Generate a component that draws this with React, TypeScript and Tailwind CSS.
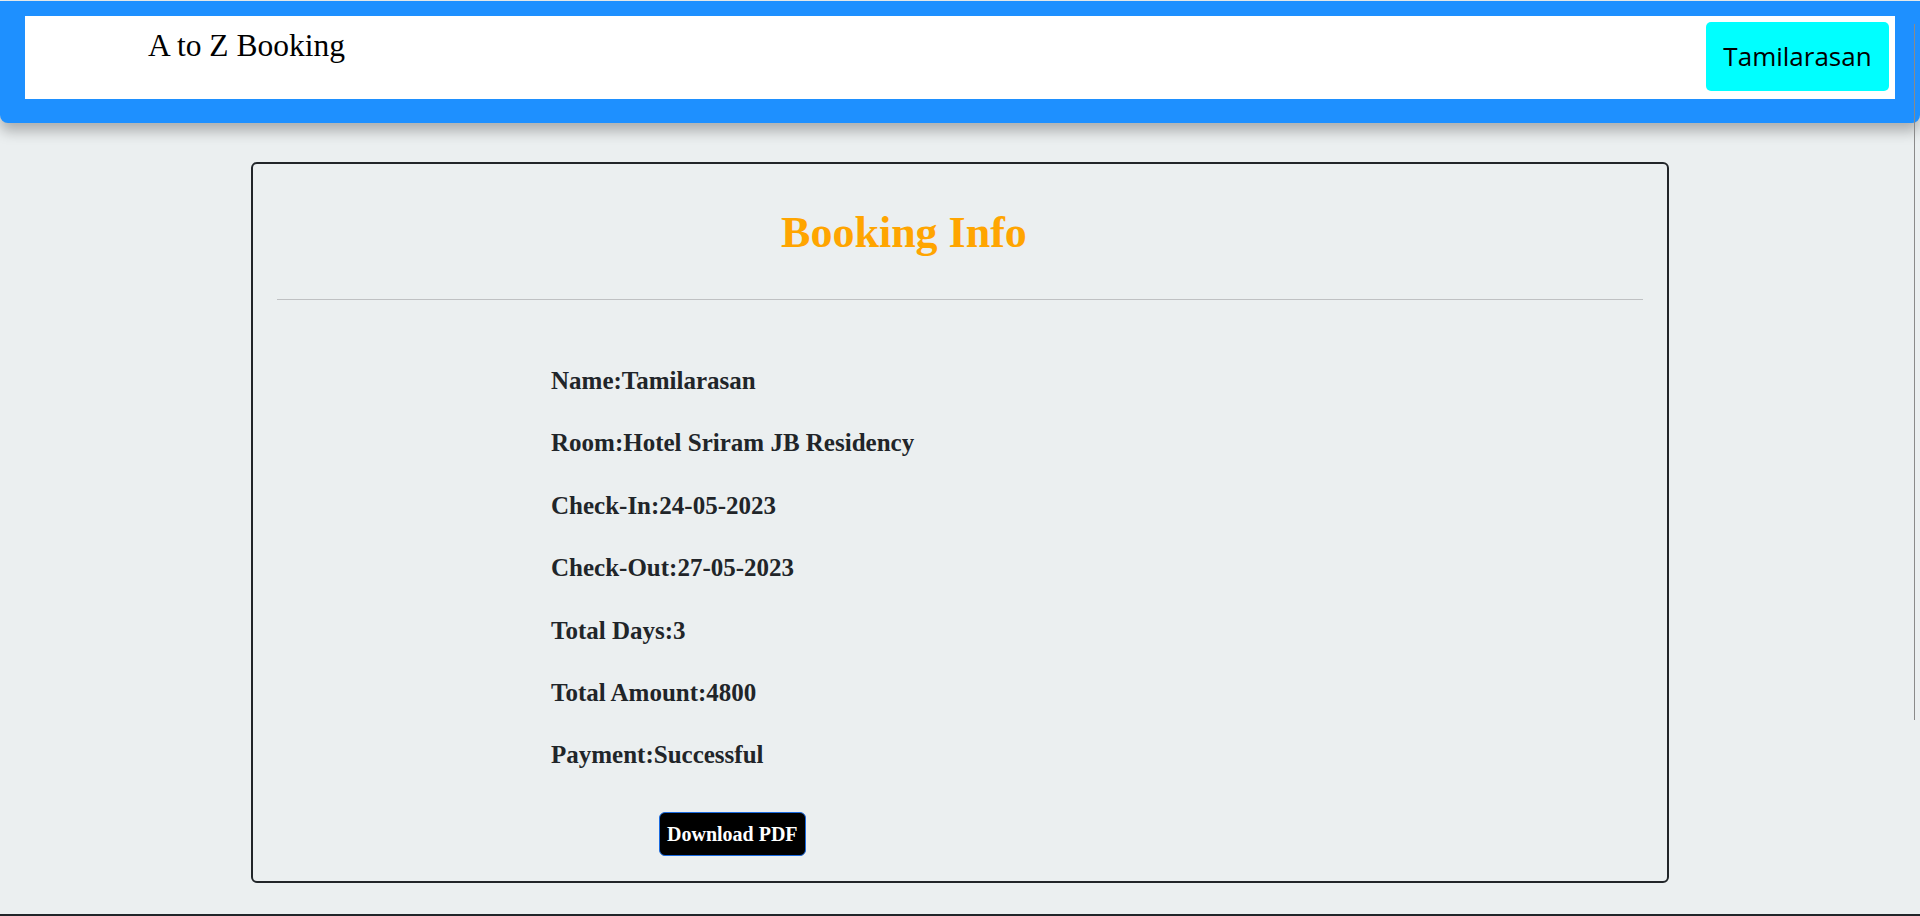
import React from 'react';

const serif = "font-['Liberation_Serif','Times_New_Roman',serif]";

const details = [
  'Name:Tamilarasan',
  'Room:Hotel Sriram JB Residency',
  'Check-In:24-05-2023',
  'Check-Out:27-05-2023',
  'Total Days:3',
  'Total Amount:4800',
  'Payment:Successful',
];

function Navbar() {
  return (
    <div className="pt-px">
      <nav className="bg-[#1e90ff] rounded-b-lg pt-[15px] pb-[24px] px-[25px] shadow-[0_8px_14px_rgba(0,0,0,0.28)]">
        <div className="bg-white h-[83px] flex items-start justify-between">
          <h1 className={`${serif} text-[31.5px] leading-[36px] text-black ml-[123px] mt-[12px]`}>
            A to Z Booking
          </h1>
          <button className="mt-[6px] mr-[6px] w-[183px] h-[69px] rounded-[5px] bg-[#00ffff] flex items-center justify-center font-['Open_Sans',sans-serif] text-[26px] text-black">
            Tamilarasan
          </button>
        </div>
      </nav>
    </div>
  );
}

export default function App() {
  return (
    <div className="min-h-screen bg-[#ebeff0] text-[#212529]">
      <Navbar />

      <div className="flex justify-center mt-[39px]">
        <div className="w-[1418px] border-2 border-[#212529] rounded-md pt-[43px] pb-[25px]">
          <div className="text-center pr-[112px]">
            <h2 className={`${serif} text-[44px] leading-[52px] font-bold text-[#ffa500]`}>
              Booking Info
            </h2>
          </div>
          <hr className="mx-[24px] mt-[40px] border-0 h-px bg-[#bfc1c3]" />

          <div className="ml-[298px] mt-[67px]">
            <div className="flex flex-col gap-[34px]">
              {details.map((d) => (
                <h4 key={d} className={`${serif} text-[25px] leading-[28.4px] font-bold`}>
                  {d}
                </h4>
              ))}
            </div>
            <button
              className={`${serif} mt-[42px] ml-[108px] h-[44px] px-[7px] flex items-center bg-black text-white text-[20px] font-bold border border-[#1a6ae0] rounded-md`}
            >
              Download PDF
            </button>
          </div>
        </div>
      </div>

      <div className="mt-[31px] border-t-2 border-[#212529] h-[120px]" />

      <div className="fixed right-[5px] top-[24px] w-px h-[696px] bg-[#8a8a8a]" />
    </div>
  );
}
